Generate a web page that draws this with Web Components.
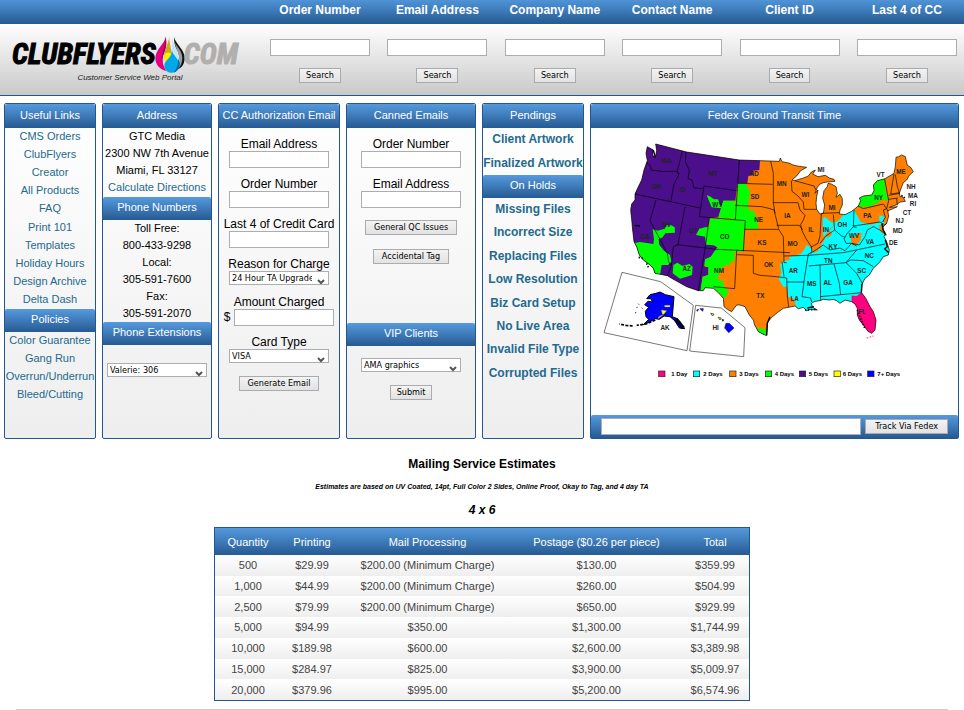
<!DOCTYPE html>
<html lang="en">
<head>
<meta charset="utf-8">
<title>ClubFlyers.com Customer Service Web Portal</title>
<style>
  :root {
    --edge: #24568f;
    --bar: linear-gradient(#559ade, #265a92);
    --link: #236a8e;
    --control: "DejaVu Sans Condensed", "DejaVu Sans", sans-serif;
  }
  body { margin: 0; background: #fff; color: #000; font: 11px/17px "Liberation Sans", Arial, sans-serif; }
  main { display: grid; grid-template-columns: 92px 110px 122px 130px 102px minmax(300px, 1fr); gap: 6px; padding: 7px 5px 0 4px; min-height: 336px; }
  .push { flex: 1; }
  .wide { --pad: 8px; }
</style>
</head>
<body>
<portal-header>
  <search-field label="Order Number"></search-field>
  <search-field label="Email Address"></search-field>
  <search-field label="Company Name"></search-field>
  <search-field label="Contact Name"></search-field>
  <search-field label="Client ID"></search-field>
  <search-field label="Last 4 of CC"></search-field>
</portal-header>
<main>
  <portal-panel>
    <panel-title first>Useful Links</panel-title>
    <link-list style="--list: 181px" items="CMS Orders|ClubFlyers|Creator|All Products|FAQ|Print 101|Templates|Holiday Hours|Design Archive|Delta Dash"></link-list>
    <panel-title>Policies</panel-title>
    <link-list items="Color Guarantee|Gang Run|Overrun/Underrun|Bleed/Cutting"></link-list>
  </portal-panel>
  <portal-panel>
    <panel-title first>Address</panel-title>
    <text-lines items="GTC Media|2300 NW 7th Avenue|Miami, FL 33127"></text-lines>
    <link-list items="Calculate Directions"></link-list>
    <panel-title>Phone Numbers</panel-title>
    <text-lines items="Toll Free:|800-433-9298|Local:|305-591-7600|Fax:|305-591-2070"></text-lines>
    <panel-title>Phone Extensions</panel-title>
    <field-stack style="--top: 18px"><select-field name="Phone extension" value="Valerie: 306"></select-field></field-stack>
  </portal-panel>
  <portal-panel>
    <panel-title first>CC Authorization Email</panel-title>
    <field-stack style="--top: 10px">
      <text-field label="Email Address"></text-field>
      <text-field label="Order Number"></text-field>
      <text-field label="Last 4 of Credit Card"></text-field>
      <select-field label="Reason for Charge" value="24 Hour TA Upgrade"></select-field>
      <text-field label="Amount Charged" prefix="$"></text-field>
      <select-field label="Card Type" value="VISA"></select-field>
      <push-button class="wide">Generate Email</push-button>
    </field-stack>
  </portal-panel>
  <portal-panel>
    <panel-title first>Canned Emails</panel-title>
    <field-stack class="push" style="--top: 10px">
      <text-field label="Order Number"></text-field>
      <text-field label="Email Address"></text-field>
      <push-button class="wide">General QC Issues</push-button>
      <push-button class="wide">Accidental Tag</push-button>
    </field-stack>
    <panel-title>VIP Clients</panel-title>
    <field-stack style="--top: 12px; --bottom: 36px">
      <select-field name="VIP client" value="AMA graphics"></select-field>
      <push-button>Submit</push-button>
    </field-stack>
  </portal-panel>
  <portal-panel>
    <panel-title first>Pendings</panel-title>
    <link-list strong style="--list: 47px" items="Client Artwork|Finalized Artwork"></link-list>
    <panel-title>On Holds</panel-title>
    <link-list strong style="--list: 187px" items="Missing Files|Incorrect Size|Replacing Files|Low Resolution|Biz Card Setup|No Live Area|Invalid File Type|Corrupted Files"></link-list>
  </portal-panel>
  <portal-panel plain>
    <panel-title first>Fedex Ground Transit Time</panel-title>
    <transit-map class="push"></transit-map>
    <track-bar></track-bar>
  </portal-panel>
</main>
<mailing-estimates></mailing-estimates>

<script>
const define = (name, css, html) => customElements.define(name, class extends HTMLElement {
  connectedCallback() {
    if (this.shadowRoot) return;
    const get = key => this.getAttribute(key) || '';
    this.attachShadow({ mode: 'open' }).innerHTML =
      `<style>*{box-sizing:border-box}${css}</style>${html(get, this)}`;
  }
});
const inputCss = `input{display:block;width:100px;height:17px;margin:0;padding:0 3px;border:1px solid #abadb3;border-radius:0;background:#fff;font:9px var(--control)}`;

define('push-button', `
  :host{display:block}
  button{display:block;height:15px;margin:0;padding:0 var(--pad,6px);border:1px solid #a9abae;border-radius:0;background:linear-gradient(#f3f3f3,#e2e2e2);color:#000;font:9px/13px var(--control);white-space:nowrap}`,
  () => `<button type="button"><slot></slot></button>`);

define('search-field', `
  :host{display:flex;flex-direction:column;align-items:center;width:100px}
  label{height:39px;color:#fff;font-weight:bold;font-size:12px;line-height:20px;white-space:nowrap}
  push-button{margin-top:12px}
  ${inputCss}`,
  get => `<label for="q">${get('label')}</label><input id="q" type="text"><push-button>Search</push-button>`);

define('text-field', `
  :host{display:block;font-size:12px}
  label{display:block;line-height:13px;text-align:center;white-space:nowrap}
  div{display:flex;justify-content:center;align-items:center;gap:4px}
  ${inputCss}`,
  get => `<label for="t">${get('label')}</label><div>${get('prefix') ? `<span>${get('prefix')}</span>` : ''}<input id="t" type="text"></div>`);

define('select-field', `
  :host{display:flex;flex-direction:column;align-items:center;padding-bottom:1px;font-size:12px}
  label{line-height:13px;white-space:nowrap}
  div{display:grid;width:100px}
  select{grid-area:1/1;appearance:none;width:100%;height:14px;margin:0;padding:0 16px 0 2px;border:1px solid #abadb3;border-radius:0;background:#fff;color:#000;font:9px/11px var(--control)}
  svg{grid-area:1/1;justify-self:end;align-self:end;margin:0 4px 0 0;width:8px;height:6px;pointer-events:none}`,
  get => `${get('label') ? `<label for="s">${get('label')}</label>` : ''}
    <div><select id="s" aria-label="${get('label') || get('name')}"><option>${get('value')}</option></select>
    <svg viewBox="0 0 8 6"><path d="M1 1 4 4 7 1" fill="none" stroke="#555" stroke-width="2"/></svg></div>`);

define('field-stack', `
  :host{display:flex;flex-direction:column;align-items:center;gap:10px;padding:var(--top,0) 0 var(--bottom,0)}
  ::slotted(push-button){margin:2px 0}`,
  () => `<slot></slot>`);

define('portal-panel', `
  :host{display:flex;flex-direction:column;border:1px solid var(--edge);border-radius:2px;background:linear-gradient(#fff,#eee);min-width:0}
  :host([plain]){background:#fff}`,
  () => `<slot></slot>`);

define('panel-title', `
  :host{display:block;background:var(--bar);color:#fff;text-align:center;border-radius:2px 2px 0 0}
  h2{margin:0;font-size:11px;font-weight:normal;line-height:21px;height:23px;white-space:nowrap}
  :host([first]) h2{line-height:23px;height:24px}`,
  () => `<h2><slot></slot></h2>`);

define('link-list', `
  :host{display:block;text-align:center;line-height:17px}
  ul{list-style:none;margin:0;padding:0;display:grid;grid-auto-rows:minmax(18px,1fr);min-height:var(--list,0)}
  li{display:flex;align-items:flex-start;justify-content:center}
  a{color:var(--link);text-decoration:none;white-space:nowrap}
  :host([strong]) a{font-weight:bold;font-size:12px;line-height:22px}`,
  get => `<ul>${get('items').split('|').map(t => `<li><a href="#">${t}</a></li>`).join('')}</ul>`);

define('text-lines', `
  :host{display:block;text-align:center;white-space:nowrap}
  p{margin:0;height:17px;line-height:16px}`,
  get => get('items').split('|').map(t => `<p>${t}</p>`).join(''));

define('portal-header', `
  :host{display:flex;justify-content:space-between;height:96px;border-bottom:1px solid var(--edge);
    background:linear-gradient(#4f94d7,#265a92) 0 0/100% 24px no-repeat,linear-gradient(#fff,#c8c8c8) 0 24px/100% 72px no-repeat;box-sizing:border-box}
  .logo{width:262px;flex:none;padding:36px 0 0 12px;color:#000;text-decoration:none}
  .mark{display:flex;align-items:center;height:36px;font:italic bold 29px/38px "Liberation Sans Narrow","Roboto Condensed",Roboto,sans-serif;-webkit-text-stroke:1px #000}
  .mark span{color:#b1afae;-webkit-text-stroke:1px #b1afae}
  svg{width:30px;height:37px;flex:none;margin:0 -1px}
  small{display:block;width:236px;text-align:center;font:italic 8px/12px "Liberation Sans",Arial,sans-serif;color:#222}
  .fields{flex:1;display:flex;justify-content:space-between;padding:0 7px 0 8px}`,
  () => `<a class="logo" href="#"><div class="mark">CLUBFLYERS<svg viewBox="460 106 90 111" aria-hidden="true">
      <path fill="#e6007e" d="M492 108C489 130 462 145 461 172 461 192 475 207 493 211 482 192 479 176 487 158 493 144 496 128 492 108Z"/>
      <path fill="#a5005c" d="M492 108C489 138 484 148 481 162 478 182 486 200 493 211 482 192 479 176 487 158 493 144 496 128 492 108Z"/>
      <path fill="#c9a91d" d="M503 108C500 130 488 146 487 168L511 166C512 150 502 130 503 108Z"/>
      <path fill="#ffed00" d="M488 164C490 156 500 153 507 158 514 166 510 184 498 187 489 186 486 176 488 164Z"/>
      <path fill="#111" d="M517 108C520 128 548 145 549 170 549 190 541 202 527 206 539 188 534 160 525 146 519 134 517 122 517 108Z"/>
      <path fill="#9a9a9a" d="M518 122C522 136 541 148 542 172 542 186 537 198 528 205 537 186 533 160 525 146Z"/>
      <path fill="#bfe6f8" d="M511 108C514 135 532 155 534 184L513 178C508 160 513 130 511 108Z"/>
      <path fill="#00a8ea" d="M511 150C514 166 534 172 531 195 528 210 518 216 508 216 495 215 487 205 488 193 490 178 509 172 511 150Z"/>
      <path fill="#006fa8" d="M529 174C541 190 532 212 515 216 526 203 530 190 529 174Z"/>
    </svg><span>COM</span></div><small>Customer Service Web Portal</small></a>
    <div class="fields"><slot></slot></div>`);

const labels = [['WA',230,92],['OR',199,169],['ID',278,180],['MT',369,131],['ND',493,131],['SD',495,201],['WY',382,224],['NE',506,269],['NV',230,284],['UT',310,301],['CO',404,319],['CA',165,321],['KS',516,338],['AZ',290,415],['NM',387,423],['OK',536,404],['TX',511,497],['MN',575,161],['WI',646,195],['MI',693,120],['MI',726,233],['IA',592,258],['IL',663,300],['MO',608,341],['IN',708,300],['OH',757,284],['KY',729,350],['VA',840,336],['WV',792,318],['PA',832,257],['NY',866,203],['VT',872,135],['ME',933,124],['NH',963,170],['MA',969,198],['RI',969,221],['CT',951,247],['NJ',929,272],['MD',923,302],['DE',910,339],['TN',715,391],['NC',838,378],['SC',815,422],['AR',610,421],['MS',665,461],['AL',713,457],['GA',774,459],['LA',614,505],['FL',817,545],['AK',225,593],['HI',377,594]];
const legend = [['1 Day','#ff0080',206,244],['2 Days','#00ffff',310,340],['3 Days','#ff8000',419,448],['4 Days','#00ff00',526,554],['5 Days','#4b0f8c',628,656],['6 Days','#ffff00',732,758],['7+ Days','#0000ff',833,862]];
const coast = `M172 50 190 60 188 76 196 82 200 62 197 42 240 53 290 66 350 75 448 90 568 94 571 84 576 95 600 100 606 104 622 108 650 112 632 122 620 138 606 150 614 152 640 144 655 138 664 126 676 120 668 132 684 140 706 136 718 144 732 148 735 154 712 156 700 158 690 162 682 172 675 190 684 180 680 200 678 220 680 238 690 252 700 250 704 225 698 205 702 182 712 170 714 160 724 162 738 170 742 190 738 202 750 193 757 206 757 225 750 240 748 252 765 254 785 244 805 228 812 212 808 204 820 198 845 195 852 182 850 165 862 152 885 146 912 130 916 110 918 82 926 80 935 75 946 80 952 106 962 112 970 125 958 136 950 150 940 158 935 170 928 190 930 200 938 200 946 214 930 216 920 224 898 232 922 230 900 240 893 242 896 258 890 280 880 290 876 282 878 300 886 310 882 320 890 335 898 360 895 375 880 380 870 395 850 415 838 435 825 445 815 465 815 488 828 506 840 530 850 545 858 570 855 600 845 610 834 604 820 585 808 570 802 555 802 535 795 522 785 515 765 510 750 520 740 512 730 508 718 510 700 508 690 512 675 514 664 520 668 532 682 540 660 538 650 542 640 532 625 536 615 528 595 532 580 535 562 548 545 562 532 578 530 617 518 612 505 605 494 585 490 570 478 555 465 530 450 525 440 525 425 545 412 538 402 530 400 505 385 488 370 475 345 473 340 482 325 482 290 470 245 445 232 437 195 430 190 415 180 405 160 390 148 375 140 350 132 335 128 300 125 268 122 240 125 222 135 210 135 192 145 170 155 150 162 120 172 92 168 70Z`;

define('transit-map', `
  :host{display:flex;min-height:0}
  svg{display:block;width:100%;height:100%}
  text{font-family:"Liberation Sans",Arial,sans-serif;font-weight:bold}`,
  () => `<svg viewBox="3 -6 1101 861" role="img" aria-label="Fedex ground transit map">
    <defs><clipPath id="land"><path d="${coast}"/></clipPath></defs>
    <path fill="#ff8000" d="${coast}"/>
    <g clip-path="url(#land)">
      <path fill="#4b0f8c" d="M100 0H510V92L508 120 490 122 488 135 475 138 472 160 442 162 436 212 400 212 385 262 360 265 345 320 370 345 384 352 362 384 345 390 344 410 356 412 355 435 338 440 330 500H100Z"/>
      <path fill="#00ff00" d="M358 265 465 272 462 300 460 365 382 352 372 346 348 344 345 320 318 315 328 296 345 292 358 290ZM400 212 436 212 436 268 385 262ZM350 195 362 200 372 208 384 208 395 235 365 232 358 215ZM443 160 468 160 472 172 480 184 474 228 440 228ZM436 228 475 230 480 245 490 240 500 265 505 296 465 297 463 272 436 268Z"/>
      <path fill="#00ff00" d="M382 352 440 362 441 368 432 370 436 392 422 394 420 404 398 408 396 420 386 432 384 450 400 452 402 470 412 478 413 490 405 505 370 475 345 473 330 490 338 440 355 435 355 410 343 408 345 388 362 380ZM202 302 225 296 228 286 244 286 254 292 255 308 226 310 218 322 206 328 208 345 222 362 240 375 245 395 234 405 215 405 210 436 190 436 140 390 130 340 150 336 190 342 192 328 188 298 198 300ZM250 405 262 398 278 408 298 402 308 410 306 435 290 440 270 446 248 430ZM495 593 530 598 540 630 490 620ZM800 232 800 190 850 140 884 140 886 180 895 212 875 208 860 222 850 218 850 228 820 230Z"/>
      <path fill="#00ffff" d="M698 264 706 262 718 272 732 282 728 290 718 298 726 314 716 322 706 318 702 332 694 345 688 372 700 366 682 350 672 368 662 352 650 345 640 362 634 370 614 378 596 380 600 390 582 392 580 396 570 402 574 430 566 446 580 470 592 470 594 500 612 506 618 530 650 550 690 550 760 530 786 522 784 496 830 500 910 370 885 300 896 285 878 276 884 260 868 256 868 276 842 284 812 276 792 240 765 248 748 270 738 276 728 275 730 290 700 320Z"/>
      <path fill="#ff8000" d="M782 326 786 318 796 322 800 310 815 308 812 330 800 344 788 346ZM866 286 888 282 886 312 874 308Z"/>
      <path fill="#ff8000" d="M662 350 694 318 690 342 684 362 672 368Z"/>
      <path fill="#ff0080" d="M785 497 800 498 815 486 880 560 870 640 830 620 785 540Z"/>
    </g>
    <g fill="none" stroke="#000" stroke-width="2" stroke-linejoin="round">
      <path d="${coast}"/>
      <path d="M168 98 180 106 184 120 215 124 262 124 268 132M277 63 262 124 266 136 252 162 242 216M288 66 286 96 298 120 294 146 306 150 312 174 338 176M135 192 330 234M198 210 180 272 232 370 236 395 244 408 232 437M285 230 264 344 250 350 244 405M342 168 328 260 466 272M342 168 440 182M448 90 436 268M444 160 548 163M436 226 515 230 540 236 552 240 556 256 566 296M542 94 550 130 550 220 555 250M550 218 624 218M262 344 380 358 600 368M358 264 346 350 325 482M466 272 460 364M463 298 566 298 580 320 582 398M440 362 434 476 370 470M442 374 490 376 490 430 510 436 535 438 560 440 590 444 592 498 596 532M576 395 582 440M560 286 628 286 638 300M624 218 630 240 645 256 640 270 632 284 636 302 648 326 664 350 666 366 655 372 644 440 640 470 636 500 662 504 665 516M604 152 606 184 624 198 640 216 642 238 680 238M614 152 650 162 672 168 678 180M694 252 690 318 684 340 662 352M694 250 748 248M730 254 734 300 708 318 690 340M734 300 755 318 765 322 770 312 790 290 792 240M790 290 800 292M790 288 870 276 884 284 890 280M804 228 820 236 880 222 895 244M884 147 896 212 890 236 880 240 886 262 878 276M912 132 902 192 930 188M896 196 930 190M895 208 924 204M920 206 922 226M916 134 922 170 928 188M654 376 760 368 885 342M582 378 654 376 M662 370 700 345 720 360 750 354 765 362 785 340 768 340 762 326 765 322M785 340 808 345 825 320 832 300 850 290 870 300 888 314M656 408 768 398M768 398 790 372 800 360M590 456 642 456M690 404 692 510M732 402 748 460 752 494 690 500M752 494 815 488M768 398 800 430 818 462M768 398 782 390 820 392 850 410M582 398 590 398M785 340 800 348"/>
      <path stroke-width="4" d="M876 280 880 300 888 316M886 330 892 350 884 356 896 368M816 462 814 486M652 534 672 530M540 560 532 580 530 616M190 60 196 82M135 286 150 288"/>
      <path stroke-width="5" stroke-dasharray="4 5" d="M645 540 680 538M802 540 824 594M934 196 948 206M146 382 162 386M170 400 175 412"/>
    </g>
    <g fill="#fff" stroke="#333" stroke-width="2">
      <path d="M96 427 212 455 310 526 291 662 42 608ZM317 526 394 534 465 593 461 680 299 663Z"/>
    </g>
    <path fill="#0000ff" stroke="#000" stroke-width="3" stroke-linejoin="round" d="M180 494 198 490 210 486 226 494 252 500 247 560 262 566 276 584 284 596 268 594 254 572 240 560 222 558 208 568 196 566 178 576 160 584 176 568 168 560 166 544 176 532 164 524 174 514 188 516 182 506 170 506Z"/>
    <path fill="none" stroke="#000" stroke-width="5" stroke-dasharray="9 4" d="M196 570 168 582 140 586M128 588 108 586 88 582"/>
    <path fill="none" stroke="#000" stroke-width="12" stroke-dasharray="3 1" d="M258 568 280 594"/>
    <path fill="none" stroke="#22c" stroke-width="3" stroke-dasharray="4 12" d="M158 536 144 520 134 560"/>
    <path fill="#ffff00" stroke="#777" d="M224 526H240V531H224ZM214 540 230 542 222 552 206 560 204 566 218 556Z"/>
    <path fill="#0000ff" stroke="#222" stroke-width="2" d="M404 594 408 580 418 580 432 594 416 608ZM330 536 340 536 338 544ZM320 540 326 538 322 544ZM396 568 402 570 398 574Z"/>
    <path fill="#ffff00" stroke="#222" stroke-width="2" d="M362 550 372 552 368 558ZM384 562 394 564 390 570Z"/>
    <path stroke="#ff5cae" stroke-width="4" stroke-dasharray="5 4" d="M830 624 850 618"/>
    <g font-size="19" text-anchor="middle" fill="#222">${labels.map(([t, x, y]) => `<text x="${x}" y="${y + 7}">${t}</text>`).join('')}</g>
    <g font-size="18">${legend.map(([t, c, x, tx]) => `<rect x="${x}" y="723" width="19" height="17" fill="${c}" stroke="#222" stroke-width="2"/><text x="${tx}" y="739">${t}</text>`).join('')}</g>
  </svg>`);

define('track-bar', `
  :host{display:flex;align-items:center;gap:4px;height:23px;padding:0 10px;background:var(--bar);border-radius:2px 2px 0 0;box-sizing:border-box}
  ${inputCss}
  input{flex:1;min-width:0}
  push-button{--pad:9px}`,
  () => `<input type="text" aria-label="Fedex tracking number"><push-button>Track Via Fedex</push-button>`);

const rows = [
  ['500','$29.99','$200.00 (Minimum Charge)','$130.00','$359.99'],
  ['1,000','$44.99','$200.00 (Minimum Charge)','$260.00','$504.99'],
  ['2,500','$79.99','$200.00 (Minimum Charge)','$650.00','$929.99'],
  ['5,000','$94.99','$350.00','$1,300.00','$1,744.99'],
  ['10,000','$189.98','$600.00','$2,600.00','$3,389.98'],
  ['15,000','$284.97','$825.00','$3,900.00','$5,009.97'],
  ['20,000','$379.96','$995.00','$5,200.00','$6,574.96']];
define('mailing-estimates', `
  :host{display:flex;flex-direction:column;align-items:center;padding-top:17px;text-align:center}
  h2,h3,p{margin:0;font-size:12px;line-height:16px}
  p{margin:7px 0;font:italic bold 7px/16px "Liberation Sans",Arial,sans-serif}
  h3{font-style:italic}
  table{width:536px;max-width:100%;height:174px;margin-top:9px;border:1px solid var(--edge);border-collapse:separate;border-spacing:0;table-layout:fixed;color:#444}
  th,td{padding:0;font-weight:normal;line-height:20px;white-space:nowrap}
  thead tr{height:27px;background:var(--bar);color:#fff}
  tbody tr{background:linear-gradient(#fff,#eee)}
  hr{align-self:stretch;margin:8px 16px 0;border:0;border-top:1px solid #ccc}`,
  () => `<h2>Mailing Service Estimates</h2>
    <p>Estimates are based on UV Coated, 14pt, Full Color 2 Sides, Online Proof, Okay to Tag, and 4 day TA</p>
    <h3>4 x 6</h3>
    <table><colgroup><col style="width:66px"><col style="width:62px"><col><col style="width:169px"><col style="width:68px"></colgroup>
    <thead><tr>${['Quantity','Printing','Mail Processing','Postage ($0.26 per piece)','Total'].map(t => `<th scope="col">${t}</th>`).join('')}</tr></thead>
    <tbody>${rows.map(r => `<tr>${r.map(c => `<td>${c}</td>`).join('')}</tr>`).join('')}</tbody></table><hr>`);
</script>
</body>
</html>
